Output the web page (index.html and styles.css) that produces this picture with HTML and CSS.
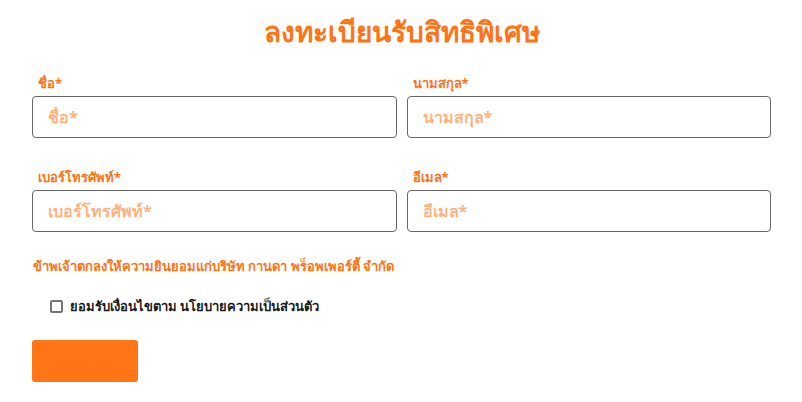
FILE: index.html
```html
<!DOCTYPE html>
<html>
<head>
	<title>ลงทะเบียนรับสิทธิพิเศษ</title>
	<link rel="stylesheet" href="styles.css">
</head>
<body>
	<div class="form-wrap">
		<h1 class="title">ลงทะเบียนรับสิทธิพิเศษ</h1>

		<div class="row">
			<div class="field">
				<label for="fname">ชื่อ*</label>
				<input type="text" id="fname" placeholder="ชื่อ*">
			</div>
			<div class="field">
				<label for="lname">นามสกุล*</label>
				<input type="text" id="lname" placeholder="นามสกุล*">
			</div>
		</div>

		<div class="row last">
			<div class="field">
				<label for="phone">เบอร์โทรศัพท์*</label>
				<input type="text" id="phone" placeholder="เบอร์โทรศัพท์*">
			</div>
			<div class="field">
				<label for="email">อีเมล*</label>
				<input type="text" id="email" placeholder="อีเมล*">
			</div>
		</div>

		<p class="consent">ข้าพเจ้าตกลงให้ความยินยอมแก่บริษัท กานดา พร็อพเพอร์ตี้ จำกัด</p>

		<div class="check">
			<input type="checkbox" id="agree">
			<label for="agree">ยอมรับเงื่อนไขตาม นโยบายความเป็นส่วนตัว</label>
		</div>

		<button class="submit-btn">ลงทะเบียน</button>
	</div>
</body>
</html>
```

FILE: styles.css
```css
body {
	margin: 0;
	padding: 0;
	background-color: #ffffff;
	font-family: "Noto Sans", "DejaVu Sans", sans-serif;
}

.form-wrap {
	padding: 12px 31px 0 32px;
}

.title {
	margin: 0 0 24px 0;
	text-align: center;
	font-size: 28px;
	font-weight: bold;
	color: #ff7314;
	line-height: 38px;
}

.row {
	display: flex;
	gap: 10px;
	margin-bottom: 30px;
}

.row.last {
	margin-bottom: 24px;
}

.field {
	flex: 1;
	display: flex;
	flex-direction: column;
}

.field label {
	font-size: 13px;
	font-weight: bold;
	color: #ff7314;
	padding-left: 6px;
	line-height: 18px;
	margin-bottom: 4px;
}

.field input {
	height: 42px;
	box-sizing: border-box;
	border: 1px solid #666666;
	border-radius: 4px;
	padding: 0 15px;
	font-size: 16px;
	font-family: inherit;
	font-weight: bold;
}

.field input::placeholder {
	color: #ffb27e;
}

.consent {
	margin: 0 0 21px 1px;
	font-size: 13px;
	font-weight: bold;
	color: #ff7314;
	line-height: 20px;
}

.check {
	display: flex;
	align-items: center;
	gap: 7px;
	height: 18px;
	padding-left: 18px;
	margin-bottom: 25px;
}

.check input {
	appearance: none;
	-webkit-appearance: none;
	margin: 0;
	width: 13px;
	height: 13px;
	box-sizing: border-box;
	border: 2px solid #75737f;
	border-radius: 2px;
	background-color: #ffffff;
}

.check label {
	font-size: 13px;
	font-weight: bold;
	color: #1a1a1a;
}

.submit-btn {
	width: 106px;
	height: 42px;
	border: none;
	border-radius: 3px;
	background-color: #ff7616;
	color: #fb7418;
	font-size: 13px;
	font-weight: bold;
	font-family: inherit;
}
```
